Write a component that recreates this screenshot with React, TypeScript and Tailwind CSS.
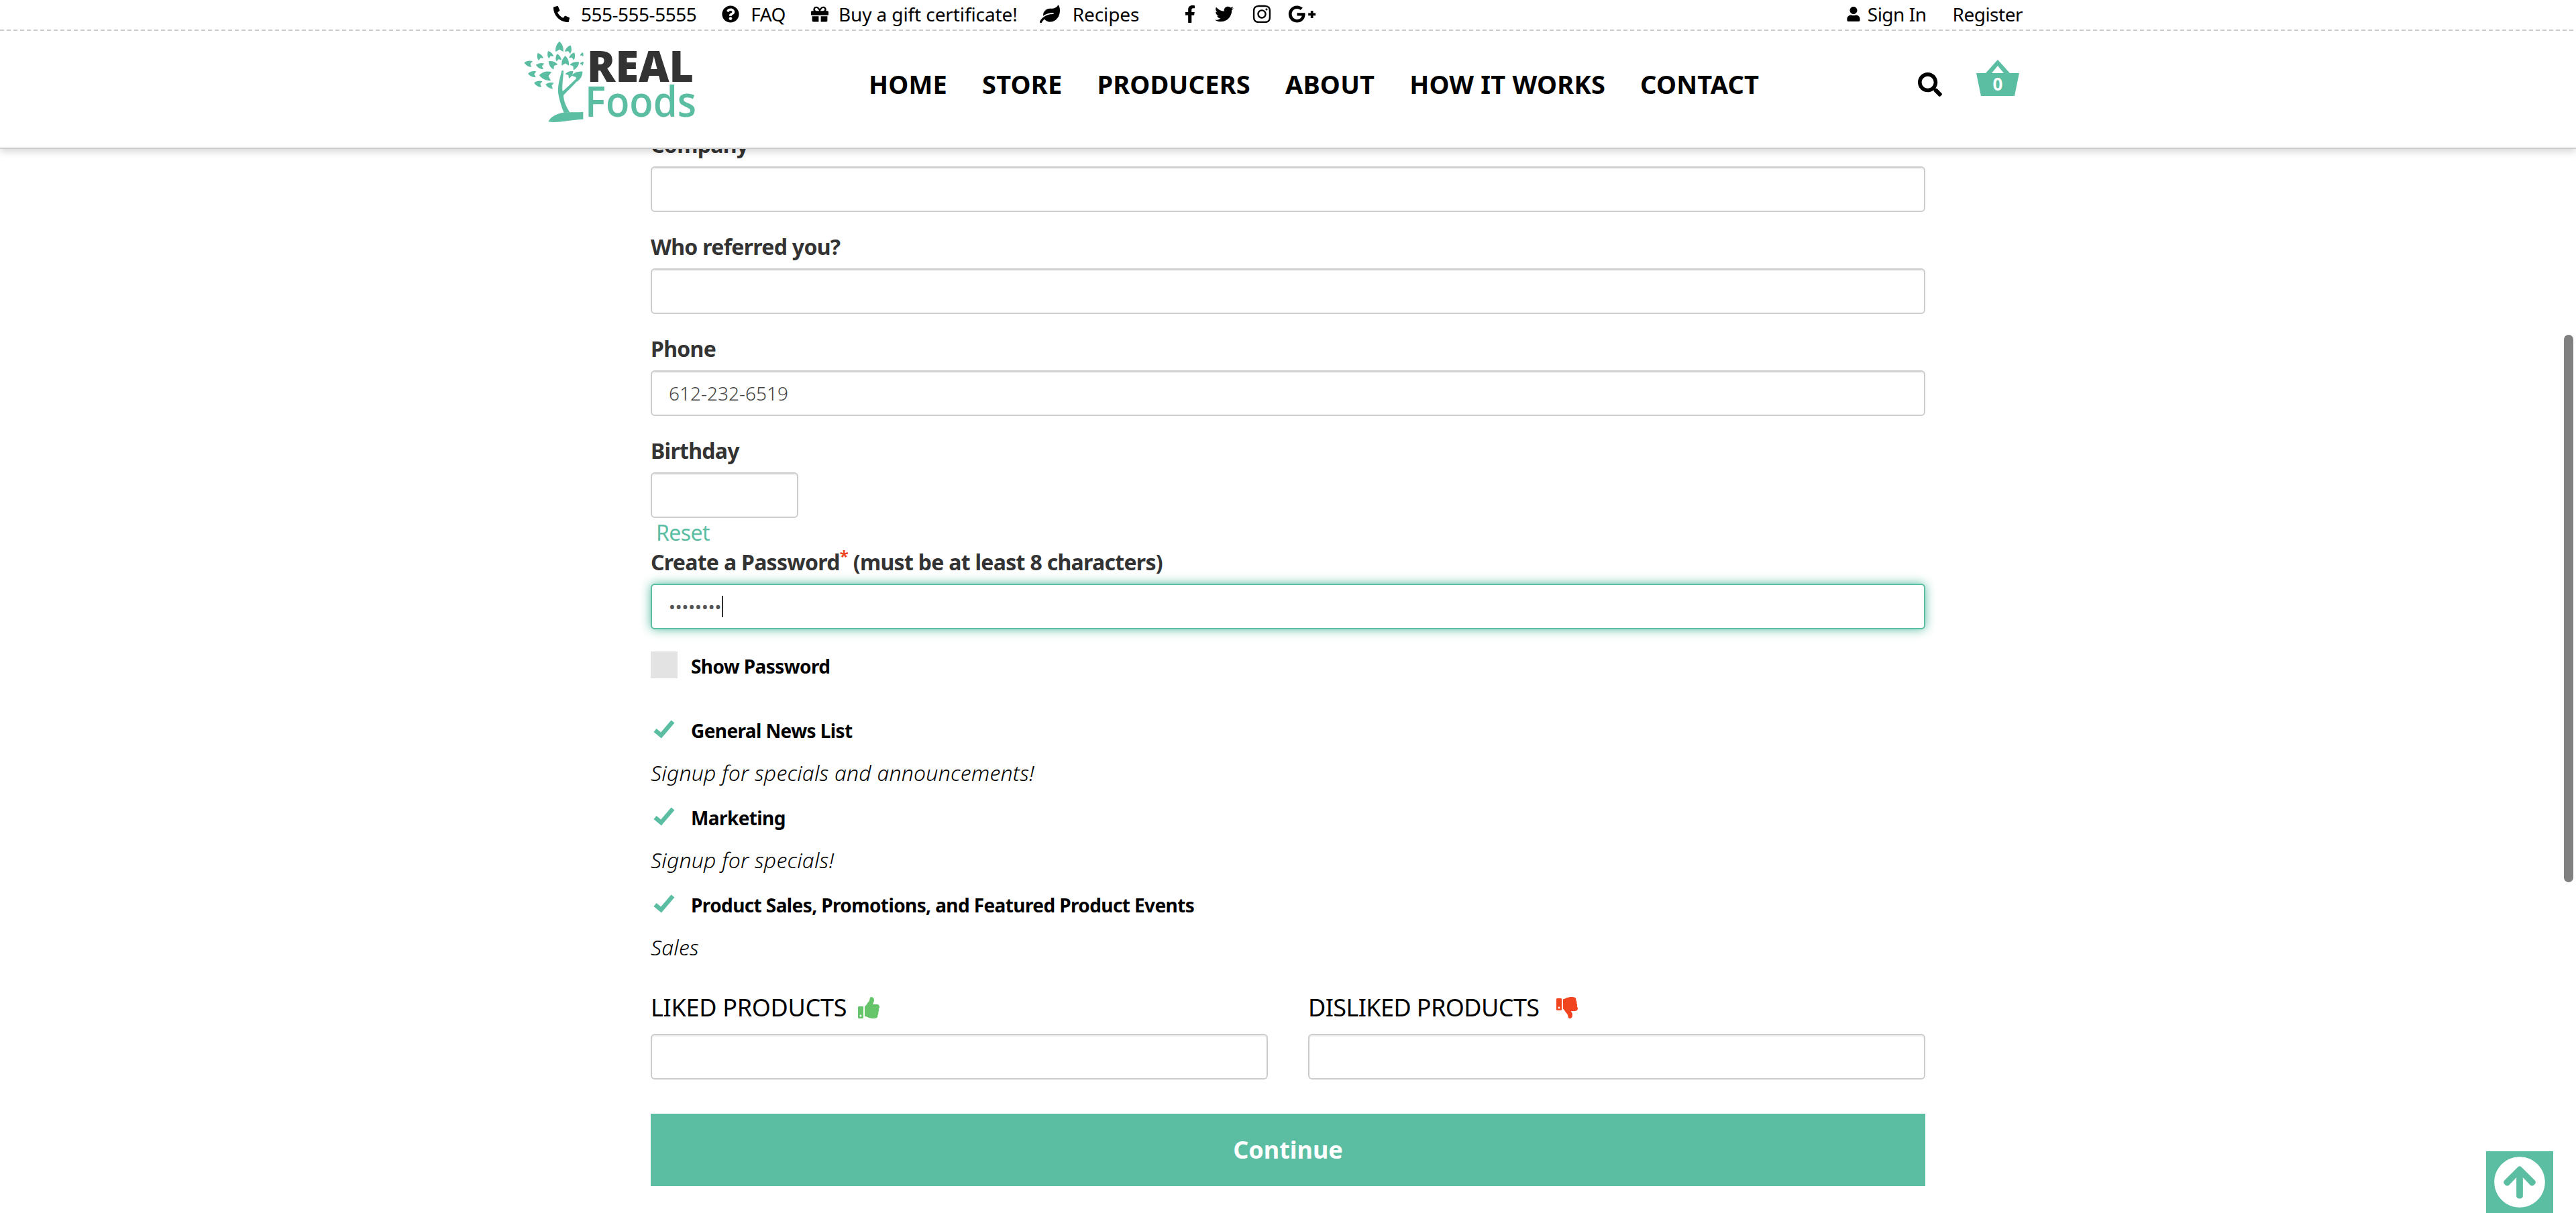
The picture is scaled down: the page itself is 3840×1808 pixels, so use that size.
import {
  FaArrowCircleUp,
  FaFacebookF,
  FaGift,
  FaGooglePlusG,
  FaInstagram,
  FaLeaf,
  FaPhoneAlt,
  FaQuestionCircle,
  FaSearch,
  FaThumbsDown,
  FaThumbsUp,
  FaTwitter,
  FaUser,
} from "react-icons/fa";

const inputClass =
  "block h-[68px] w-full rounded-[6px] border-2 border-[#ccc] bg-white px-[25px] text-[28px] font-light text-[#444] shadow-[inset_0_2px_2px_rgba(0,0,0,0.07)] outline-none";

const labelClass = "block h-11 text-[32px] font-bold leading-[44px] tracking-[-0.7px] text-[#333]";

// [x, y, rotation, scale] for every leaf of the logo tree
const leaves = [
  [186, 55, 0, 1.3],
  [228, 65, 22, 1],
  [97, 97, -28, 0.9],
  [143, 88, -25, 0.9],
  [180, 102, -15, 0.9],
  [245, 95, 25, 0.9],
  [212, 118, 0, 1.2],
  [287, 88, 15, 0.5],
  [48, 128, -80, 1],
  [100, 138, -80, 1],
  [155, 132, -50, 1.15],
  [255, 135, 55, 1.15],
  [287, 128, 40, 0.5],
  [65, 175, -85, 1],
  [125, 183, -85, 1.5],
  [232, 175, 50, 1],
  [268, 182, 50, 1.4],
  [92, 218, -80, 1],
  [143, 225, -80, 1],
];

function Logo() {
  return (
    <svg width="280" height="140" viewBox="0 0 280 140" className="block shrink-0">
      <g transform="scale(0.3333)" fill="#5bbea3">
        {leaves.map(([x, y, r, s], i) => (
          <path
            key={i}
            transform={`translate(${x} ${y}) rotate(${r}) scale(${s})`}
            d="M0 -20 C11 -10 15 2 13 16 L0 8 L-13 16 C-15 2 -11 -10 0 -20 Z"
          />
        ))}
        <path d="M196 160 C190 190 174 230 182 270 C188 300 196 325 206 348 L232 346 C218 325 204 295 204 270 C222 250 250 225 270 200 L262 194 C240 215 218 238 200 252 C196 225 204 190 204 160 Z" />
        <path d="M136 388 C150 360 190 346 225 346 C250 346 275 346 292 344 L292 378 C250 376 180 396 136 388 Z" />
      </g>
      <text x="103" y="70" textLength="159" lengthAdjust="spacingAndGlyphs" fontFamily="'Open Sans', sans-serif" fontWeight="800" fontSize="63" fill="#333">
        REAL
      </text>
      <text x="100" y="122" textLength="166" lengthAdjust="spacingAndGlyphs" fontFamily="'Open Sans', sans-serif" fontWeight="600" fontSize="63" fill="#5bbea3">
        Foods
      </text>
    </svg>
  );
}

function Basket() {
  return (
    <div className="relative h-[55px] w-[64px]">
      <svg width="64" height="55" viewBox="0 0 64 55" className="block">
        <path
          fill="#5bbea3"
          fillRule="evenodd"
          d="M32 0 L50 20 L64 20 L57 54 L7 54 L0 20 L14 20 Z M32 9 L23 20 L41 20 Z"
        />
      </svg>
      <span className="absolute inset-x-0 top-[20px] text-center text-[26px] font-bold leading-[32px] text-white">0</span>
    </div>
  );
}

function Check() {
  return (
    <svg width="32" height="28" viewBox="0 0 32 28" className="ml-[4px] -mt-[4px] shrink-0">
      <path d="M2.5 15.5 L11.5 23 L29 2.5" fill="none" stroke="#5bbea3" strokeWidth="6.5" />
    </svg>
  );
}

function TopBar() {
  return (
    <div className="flex h-[44px] items-center justify-between px-[825px] pb-[3px] text-[28px] leading-none tracking-[-0.1px] text-black">
      <div className="flex items-center">
        <FaPhoneAlt className="text-[24px]" />
        <span className="ml-[17px] tracking-[-0.5px]">555-555-5555</span>
        <FaQuestionCircle className="ml-[38px] text-[26px]" />
        <span className="ml-[17px] tracking-[-0.5px]">FAQ</span>
        <FaGift className="ml-[38px] text-[26px]" />
        <span className="ml-[15px]">Buy a gift certificate!</span>
        <FaLeaf className="ml-[33px] text-[30px]" />
        <span className="ml-[19px]">Recipes</span>
        <FaFacebookF className="ml-[63px] text-[26px]" />
        <FaTwitter className="ml-[24px] text-[28px]" />
        <FaInstagram className="ml-[27px] text-[30px]" />
        <FaGooglePlusG className="ml-[24px] text-[42px]" />
      </div>
      <div className="flex items-center">
        <FaUser className="text-[22px]" />
        <span className="ml-[10px] tracking-[-0.5px]">Sign In</span>
        <span className="ml-[39px] tracking-[-0.5px]">Register</span>
      </div>
    </div>
  );
}

function Header() {
  const nav = ["HOME", "STORE", "PRODUCERS", "ABOUT", "HOW IT WORKS", "CONTACT"];
  return (
    <header className="relative z-10 h-[222px] border-b-2 border-[#ccc] bg-white shadow-[0_4px_10px_rgba(0,0,0,0.16)]">
      <TopBar />
      <div className="h-[2px] bg-[repeating-linear-gradient(90deg,#ccc_0,#ccc_6px,transparent_6px,transparent_10px)]" />
      <div className="mx-auto flex h-[174px] w-[2280px] items-start">
        <div className="-ml-[8px] mt-[6px]">
          <Logo />
        </div>
        <nav className="ml-[243px] mt-[55px] flex gap-[52px] text-[38px] font-bold leading-[48px] tracking-[0.2px] text-black">
          {nav.map((item) => (
            <span key={item} className="whitespace-nowrap">
              {item}
            </span>
          ))}
        </nav>
        <div className="ml-auto mr-[50px] mt-[43px] flex items-start">
          <FaSearch className="mt-[19px] text-[36px] text-black" />
          <div className="ml-[51px]">
            <Basket />
          </div>
        </div>
      </div>
    </header>
  );
}

function Field({ label, value }: { label: string; value?: string }) {
  return (
    <div className="mb-[30px]">
      <label className={`${labelClass} mb-[10px]`}>{label}</label>
      <input className={inputClass} defaultValue={value} readOnly />
    </div>
  );
}

function ListOption({ title, note }: { title: string; note: string }) {
  return (
    <div className="h-[130px]">
      <div className="flex h-[44px] items-center">
        <Check />
        <span className="ml-[24px] text-[28px] font-bold tracking-[-0.6px] text-black">{title}</span>
      </div>
      <p className="mt-[19px] text-[32px] font-light italic leading-[44px] tracking-[0.2px] text-black">{note}</p>
    </div>
  );
}

export default function App() {
  return (
    <div className="relative h-[1808px] overflow-hidden bg-white font-['Noto_Sans',sans-serif]">
      <Header />

      <main className="mx-auto -mt-[28px] w-[1900px]">
        <Field label="Company" />
        <Field label="Who referred you?" />
        <Field label="Phone" value="612-232-6519" />

        <label className={`${labelClass} mb-[10px]`}>Birthday</label>
        <input className={`${inputClass} !w-[220px]`} readOnly />
        <a className="ml-2 block h-11 text-[32px] leading-[44px] tracking-[-0.6px] text-[#5bbea3]">Reset</a>

        <label className={`${labelClass} mb-[10px]`}>
          Create a Password
          <sup className="text-[#f0451f]">*</sup> (must be at least 8 characters)
        </label>
        <div className="flex h-[68px] items-center rounded-[6px] border-2 border-[#5bbea3] bg-white pl-[25px] shadow-[0_0_16px_rgba(91,190,163,1)]">
          <span className="text-[26px] leading-none text-[#555]">••••••••</span>
          <span className="ml-[1px] h-[32px] w-[2px] bg-[#333]" />
        </div>

        <div className="mt-[33px] flex h-[40px] items-start">
          <span className="h-[40px] w-[40px] bg-[#e3e3e3]" />
          <span className="ml-[20px] text-[28px] font-bold leading-[44px] tracking-[-0.6px] text-black">Show Password</span>
        </div>

        <div className="mt-[56px]">
          <ListOption title="General News List" note="Signup for specials and announcements!" />
          <ListOption title="Marketing" note="Signup for specials!" />
          <ListOption title="Product Sales, Promotions, and Featured Product Events" note="Sales" />
        </div>

        <div className="mt-[23px] grid grid-cols-2 gap-x-[60px]">
          <div>
            <div className="flex h-[44px] items-center text-[36px] tracking-[-0.3px] text-black">
              LIKED PRODUCTS
              <FaThumbsUp className="ml-[17px] text-[32px] text-[#66c56a]" />
            </div>
            <input className={`${inputClass} mt-[17px]`} readOnly />
          </div>
          <div>
            <div className="flex h-[44px] items-center text-[36px] tracking-[-0.6px] text-black">
              DISLIKED PRODUCTS
              <FaThumbsDown className="ml-[26px] text-[32px] text-[#f0451f]" />
            </div>
            <input className={`${inputClass} mt-[17px]`} readOnly />
          </div>
        </div>

        <button className="mt-[51px] block h-[108px] w-full bg-[#5bbea3] text-[36px] font-bold text-white">
          Continue
        </button>
      </main>

      {/* page scrollbar thumb */}
      <div className="absolute right-[4px] top-[499px] h-[816px] w-[14px] rounded-full bg-[#808080]" />

      {/* back to top */}
      <div className="absolute right-[34px] top-[1716px] flex h-[100px] w-[100px] items-start justify-center bg-[#5bbea3] pt-[7px]">
        <FaArrowCircleUp className="text-[78px] text-white" />
      </div>
    </div>
  );
}
